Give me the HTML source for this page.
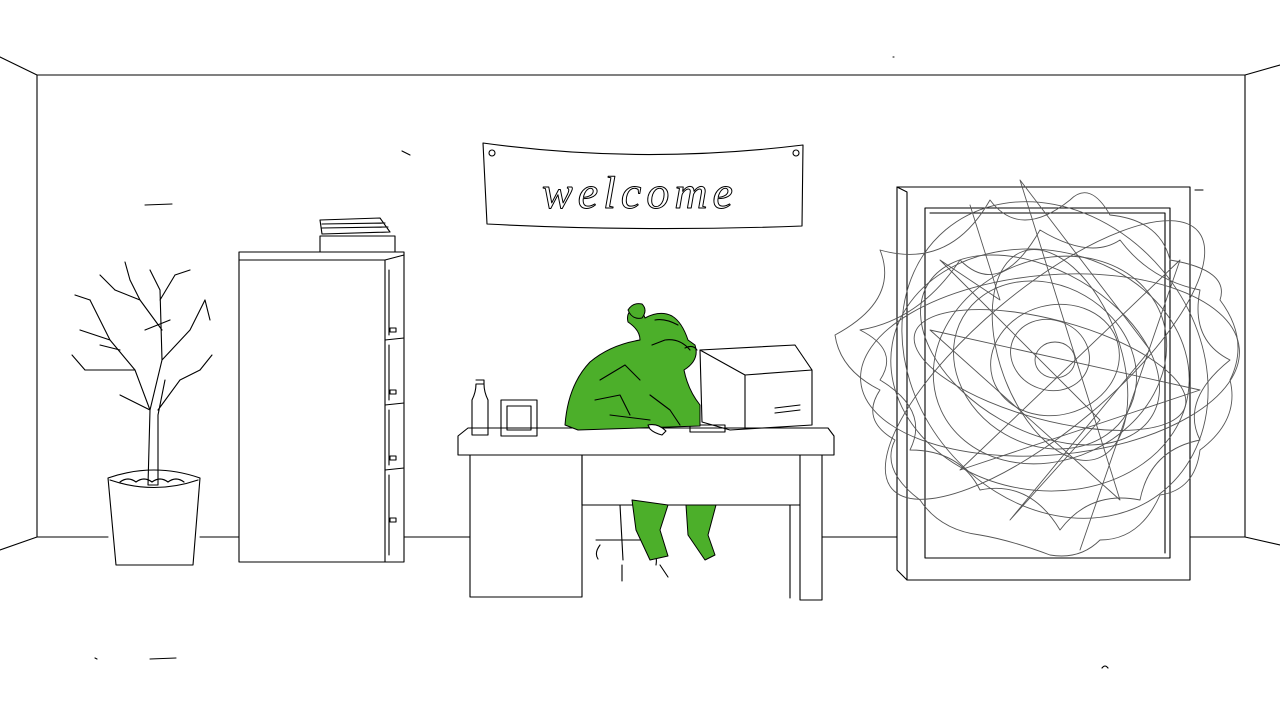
<!DOCTYPE html>
<html><head><meta charset="utf-8"><style>
html,body{margin:0;padding:0;background:#fff;width:1280px;height:720px;overflow:hidden}
svg{display:block}
</style></head><body>
<svg width="1280" height="720" viewBox="0 0 1280 720" xmlns="http://www.w3.org/2000/svg" fill="none" stroke="#000" stroke-width="1.1" stroke-linecap="round" stroke-linejoin="round">
<path d="M0 57 L37 75 L1245 75 L1280 65"/>
<path d="M37 75 L37 537 L0 550"/>
<path d="M1245 75 L1245 537 L1280 545"/>
<path d="M37 537 L108 537 M200 537 L239 537 M404 537 L470 537 M822 537 L897 537 M1190 537 L1245 537"/>
<path d="M145 205 L172 204 M402 151 L410 155 M150 659 L176 658 M95 658 L97 659 M1102 668 q3 -4 6 0 M893 57 l1 0"/>
<path d="M483 143 Q640 165 803 145 L802 226 Q640 232 487 224 Z"/>
<circle cx="492" cy="153" r="3"/><circle cx="796" cy="153" r="3"/>
<text x="640" y="208" text-anchor="middle" font-family="Liberation Serif, serif" font-style="italic" font-size="46" fill="#fff" stroke="#000" stroke-width="1" letter-spacing="5">welcome</text>
<rect x="239" y="252" width="165" height="310"/>
<path d="M239 260 L385 260 L404 255 M385 260 L385 562"/>
<path d="M385 340 L404 338 M385 405 L404 403 M385 470 L404 468"/>
<path d="M389 270 L389 335 M389 345 L389 400 M389 410 L389 465 M389 475 L389 555"/>
<rect x="390" y="328" width="6" height="4"/><rect x="390" y="390" width="6" height="4"/><rect x="390" y="456" width="6" height="4"/><rect x="390" y="518" width="6" height="4"/>
<path d="M320 236 L395 236 L395 252 L320 252 Z M320 220 L380 218 L390 232 L322 234 Z M322 224 L385 223 M322 228 L388 227"/>
<path d="M108 478 Q154 462 200 478 L193 565 L116 565 Z"/>
<path d="M110 480 Q154 495 198 480"/>
<path d="M120 482 q8 -6 16 0 q8 -6 16 0 q8 -6 16 0 q8 -6 16 0"/>
<path d="M148 485 L150 410 L135 370 M150 410 L162 360 L160 290 M162 360 L190 330 M135 370 L110 340 L90 300 M135 370 L85 370 M162 330 L140 300 L130 280 M160 300 L175 275 M190 330 L205 300 M110 340 L80 330 M150 410 L120 395 M158 410 L180 380 L200 370 M160 290 L150 270 M140 300 L115 290 M175 275 L190 270 M148 485 L158 485 L158 415 L165 380"/>
<path d="M90 300 L75 295 M85 370 L72 355 M205 300 L210 320 M200 370 L212 355 M130 280 L125 262 M115 290 L100 275 M145 330 L170 320 M120 350 L100 345"/>
<path d="M458 436 L468 428 L828 428 L834 436 L834 455 L458 455 Z"/>
<rect x="470" y="455" width="112" height="142"/>
<path d="M582 455 L582 505 L800 505 L800 455 M800 455 L800 600 L822 600 L822 455 M790 505 L790 598"/>
<path d="M620 505 L623 560 M596 540 L650 540 M600 545 q-6 8 -2 14 M650 545 q8 8 6 20 M622 565 l0 16 M660 565 l8 12"/>
<path d="M472 400 L472 435 L488 435 L488 400 Q484 392 484 384 L476 384 Q476 392 472 400 Z M476 380 L484 380 L484 384 L476 384"/>
<rect x="501" y="400" width="36" height="36"/><rect x="507" y="406" width="24" height="24"/>
<path d="M700 350 L795 345 L812 370 L812 425 L730 430 L702 422 Z M745 375 L812 370 M745 375 L745 428 M700 350 L745 375"/>
<path d="M775 408 L800 405 M775 413 L800 410"/>
<path d="M690 425 L725 425 L725 432 L690 432 Z"/>
<g fill="#4caf2a" stroke="#000" stroke-width="1">
<path d="M640 305 Q625 310 628 322 Q640 330 640 340 Q610 345 590 362 Q568 385 565 425 L578 430 L700 426 L700 405 Q688 390 684 370 Q700 360 695 345 L688 340 Q682 322 672 316 Q660 310 645 318 Z"/>
<path d="M632 500 L636 530 L650 560 L668 556 L660 530 L668 505 Z"/>
<path d="M686 505 L688 535 L705 560 L715 555 L708 535 L716 505 Z"/>
</g>
<path d="M655 320 Q665 318 678 325 M652 345 L665 340 Q680 338 690 350 M600 380 L625 365 L640 380 M595 400 L620 395 L630 415 M650 395 L670 410 L680 425 M610 415 L650 420 M685 348 q8 -4 12 2"/>
<path d="M648 425 q10 -2 18 6 l-4 4 q-8 -2 -12 -6 Z" fill="#fff"/>
<path d="M897 187 L1190 187 L1190 580 L907 580 L897 570 Z"/>
<path d="M907 192 L907 580 M897 187 L907 192"/>
<rect x="925" y="208" width="245" height="350"/>
<path d="M930 213 L1165 213 L1165 553 M1195 190 l8 0"/>
<g stroke="#555" stroke-width="0.9">
<ellipse cx="1055" cy="360" rx="20" ry="18"/>
<ellipse cx="1050" cy="355" rx="40" ry="35" transform="rotate(20 1050 355)"/>
<ellipse cx="1055" cy="360" rx="65" ry="55" transform="rotate(-15 1055 360)"/>
<ellipse cx="1045" cy="365" rx="95" ry="80" transform="rotate(30 1045 365)"/>
<ellipse cx="1050" cy="360" rx="120" ry="100" transform="rotate(-25 1050 360)"/>
<ellipse cx="1040" cy="370" rx="150" ry="120" transform="rotate(10 1040 370)"/>
<ellipse cx="1050" cy="365" rx="190" ry="90" transform="rotate(-5 1050 365)"/>
<ellipse cx="1055" cy="360" rx="170" ry="140" transform="rotate(50 1055 360)"/>
<ellipse cx="1045" cy="360" rx="200" ry="70" transform="rotate(-40 1045 360)"/>
<ellipse cx="1060" cy="355" rx="110" ry="60" transform="rotate(70 1060 355)"/>
<ellipse cx="1040" cy="350" rx="80" ry="130" transform="rotate(-60 1040 350)"/>
<ellipse cx="1050" cy="370" rx="140" ry="50" transform="rotate(15 1050 370)"/>
<path d="M835 335 Q900 300 880 250 Q950 270 990 200 Q1020 240 1070 200 Q1090 180 1110 215 Q1160 220 1170 260 Q1230 270 1220 300 Q1250 340 1230 380 Q1240 420 1200 450 Q1195 490 1160 495 Q1140 540 1100 540 Q1080 560 1050 555 Q1010 540 980 535 Q940 530 920 500 Q880 470 895 440 Q860 420 880 390 Q840 370 835 335 Z"/>
<path d="M860 330 Q920 320 960 260 Q1000 300 1040 230 Q1090 260 1120 240 Q1150 280 1200 290 Q1190 340 1230 360 Q1180 400 1200 440 Q1150 450 1140 500 Q1090 490 1060 530 Q1030 480 980 490 Q960 450 910 450 Q930 410 880 380 Q900 350 860 330 Z"/>
<path d="M970 205 L1000 300 L940 260 L1100 420 L1010 520 L1150 350 L1020 180 L1120 500 L930 330 L1200 390 L960 470 L1180 260 L1080 550"/>
</g>
<g fill="#4caf2a" stroke="#000" stroke-width="1"><path d="M628 310 q5 -8 14 -6 q6 6 0 14 q-10 2 -14 -8 Z"/></g>
</svg>
</body></html>
